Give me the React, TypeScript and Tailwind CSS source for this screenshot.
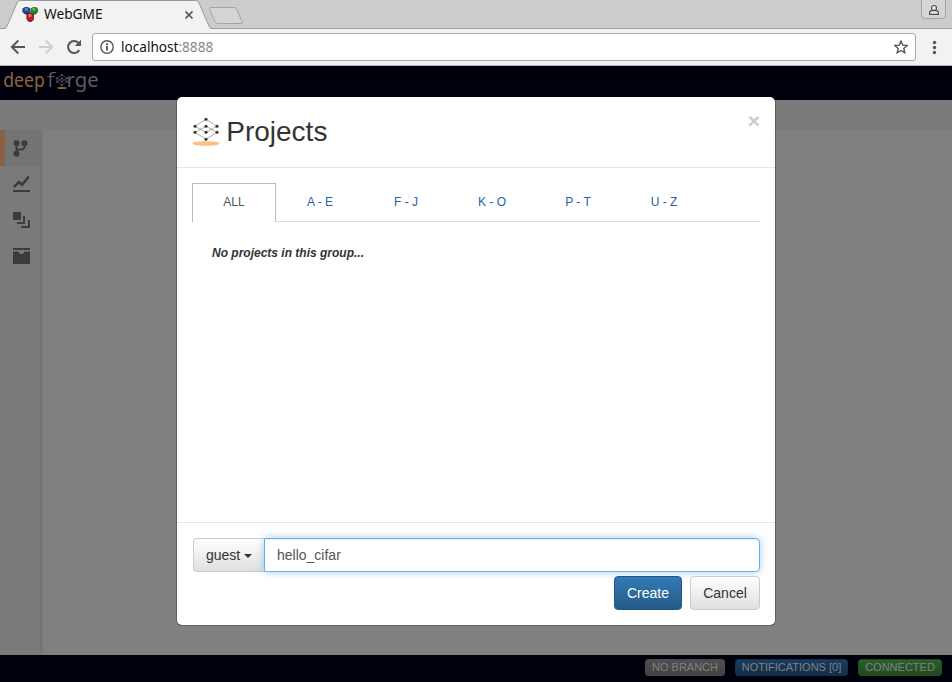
import React from "react";

const sans = "font-['Liberation_Sans',Arial,sans-serif]";
const ui = "font-['Noto_Sans',sans-serif]";

function BrowserTabs() {
  return (
    <div className="relative flex h-[29px] shrink-0 bg-[#cccccc]">
      <svg className="absolute inset-0" width="952" height="29" viewBox="0 0 952 29">
        <path d="M0 28.5H952" stroke="#a0a0a0" />
        <path d="M0 29V28.5H4Q6 28.5 7 26L17 3Q18 .5 20 .5H196Q198 .5 199 3L209 26Q210 28.5 212 28.5V29Z" fill="#f2f2f2" stroke="#999" />
        <path d="M0 28.5H4M212 28.5H214" stroke="#a0a0a0" />
        <path d="M6 29H210" stroke="#f2f2f2" strokeWidth="2" />
        <path d="M211 7.5H234Q236 7.5 237 9.500L242 21.500Q243 23.500 241 23.500H218Q216 23.500 215 21.500L209.500 9.500Q209 7.500 211 7.500Z" fill="#d4d4d4" stroke="#a3a3a3" />
        <path d="M921.500 0V15Q921.500 18.500 925 18.500H942Q945.500 18.500 945.500 15V0" fill="#d5d5d5" stroke="#a3a3a3" />
        <circle cx="934" cy="8" r="2.500" fill="#eee" stroke="#4d4d4d" strokeWidth="1.200" />
        <path d="M929.600 14.400V13Q929.600 10.800 932 10.600H936Q938.400 10.800 938.400 13V14.400Z" fill="#eee" stroke="#4d4d4d" strokeWidth="1.200" />
      </svg>
      <div className="relative flex h-[28px] w-[200px] items-center pl-[22px]">
        <svg width="17" height="17" viewBox="0 0 17 17">
          <path d="M3 1H6L8.300 2.500V6L6 8H2.500L.3 6V2.800Z" fill="#24468f" />
          <path d="M11 1H14L16 2.800V6L14 8H10.500L8.500 6V2.500Z" fill="#268423" />
          <path d="M6.500 7H10L12 9V13L10 15.500H6.500L4.300 13V9Z" fill="#c21b20" />
          <circle cx="4.300" cy="3.300" r="1.600" fill="#6484c0" />
          <circle cx="11.800" cy="3.200" r="1.600" fill="#67b456" />
          <circle cx="8" cy="9.500" r="1.700" fill="#ef6868" />
          <path d="M2.500 7.500L5 8.500 8 6.300 11 8.500 14 7.500M5 13.500L8 15.800 11.500 13.500" fill="none" stroke="#222" strokeWidth=".8" />
        </svg>
        <span className={`${ui} ml-[5px] text-[13.700px] leading-7 text-[#111]`}>WebGME</span>
        <svg className="absolute left-[185px] top-[11px]" width="9" height="9" viewBox="0 0 9 9">
          <path d="M.5 .5L7.500 7.500M7.500 .5L.5 7.500" stroke="#555" strokeWidth="1.700" />
        </svg>
      </div>
    </div>
  );
}

function AddressBar() {
  return (
    <div className="flex h-[37px] shrink-0 items-center border-b border-[#b2b4b2] bg-[#f2f2f2] pl-[10px]">
      <svg width="16" height="16" viewBox="0 0 16 16" fill="none" stroke="#555" strokeWidth="1.900">
        <path d="M15 8H2M8.300 1.500L1.800 8L8.300 14.500" />
      </svg>
      <svg className="ml-3" width="16" height="16" viewBox="0 0 16 16" fill="none" stroke="#d0d0d0" strokeWidth="1.900">
        <path d="M1 8H14M7.700 1.500L14.200 8L7.700 14.500" />
      </svg>
      <svg className="ml-3" width="16" height="16" viewBox="0 0 16 16">
        <path d="M13.300 11A6 6 0 1 1 12.500 3.900" fill="none" stroke="#555" strokeWidth="2" />
        <path d="M15 .8V7H8.800Z" fill="#555" />
      </svg>
      <div className="ml-[10px] flex h-7 w-[824px] items-center rounded-[3px] border border-[#a9a9a9] bg-white pl-[7px]">
        <svg width="14" height="14" viewBox="0 0 14 14" fill="none" stroke="#555">
          <circle cx="7" cy="7" r="6.200" strokeWidth="1.400" />
          <path d="M7 6V10.500M7 3.300V5" strokeWidth="1.900" />
        </svg>
        <span className={`${ui} ml-[7px] text-[13.600px] leading-6 text-[#111]`}>
          localhost<span className="text-[#888]">:8888</span>
        </span>
        <svg className="ml-auto mr-[7px]" width="14" height="14" viewBox="0 0 14 14">
          <path d="M7 1L8.700 5.100 13.200 5.500 9.800 8.400 10.800 12.800 7 10.500 3.200 12.800 4.200 8.400 .8 5.500 5.300 5.100Z" fill="none" stroke="#555" strokeWidth="1.400" />
        </svg>
      </div>
      <svg className="ml-4" width="5" height="15" viewBox="0 0 5 15" fill="#555">
        <circle cx="2.500" cy="2.500" r="1.700" />
        <circle cx="2.500" cy="7.500" r="1.700" />
        <circle cx="2.500" cy="12.500" r="1.700" />
      </svg>
    </div>
  );
}

function Network({ color, dot, line }: { color: string; dot: number; line: number }) {
  return (
    <g>
      <path d="M14 1.500L3 8.500L14 14.500L25 8.500ZM14 8.500L3 14.500L14 21.500L25 14.500Z" fill="none" stroke={color} strokeWidth={line} strokeOpacity=".8" />
      {[[14, 1.500], [3, 8.500], [14, 8.500], [25, 8.500], [3, 14.500], [14, 14.500], [25, 14.500], [14, 21.500]].map(([x, y]) => (
        <circle key={`${x}-${y}`} cx={x} cy={y} r={dot} fill={color} />
      ))}
    </g>
  );
}

function Header() {
  return (
    <div className="h-[34px] shrink-0 bg-[#00000d]">
      <svg width="104" height="34" viewBox="0 0 104 34" className="font-['Noto_Sans',sans-serif]">
        <text transform="translate(3.300 21) scale(.88 1)" fontSize="20" fill="#8e653f">deep</text>
        <text transform="translate(46.500 21) scale(1.350 1)" fontSize="20" fontWeight="300" fill="#5c5c62">f</text>
        <g transform="translate(55.500 8) scale(.46 .52)">
          <Network color="#74747e" dot={1.700} line={1.300} />
        </g>
        <ellipse cx="62" cy="22" rx="4.800" ry="1.100" fill="#8e653f" />
        <text transform="translate(66.500 21) scale(1.020 1)" fontSize="20" fill="#5c5c62">rge</text>
      </svg>
    </div>
  );
}

function Sidebar() {
  const cell = "flex h-9 items-center pb-[2px] pl-[13px]";
  return (
    <div className="w-[40px] shrink-0 bg-[#7a7a7a] shadow-[1px_0_4px_rgba(0,0,0,0.2)]">
      <div className="flex h-9 items-center border-l-[5px] border-[#8c6042] bg-[#747474] pl-2">
        <svg width="16" height="17" viewBox="0 0 16 17" fill="#3b3b3b">
          <circle cx="3.500" cy="3.300" r="3" />
          <circle cx="11.500" cy="3.300" r="3" />
          <circle cx="3.500" cy="13.700" r="3" />
          <path d="M3.500 3V14M11.500 3V7.500L9.500 9.500H3.500" fill="none" stroke="#3b3b3b" strokeWidth="1.900" />
        </svg>
      </div>
      <div className={cell}>
        <svg width="17" height="17" viewBox="0 0 17 17">
          <path d="M.8 12L6 7L9 9.800L15.800 1.500" fill="none" stroke="#3b3b3b" strokeWidth="2.600" />
          <path d="M0 16H17" stroke="#3b3b3b" strokeWidth="2" />
        </svg>
      </div>
      <div className={cell}>
        <svg width="17" height="17" viewBox="0 0 17 17">
          <path d="M0 1H8V9H0Z" fill="#3b3b3b" />
          <path d="M11 5V12H4M16 9V16H8" fill="none" stroke="#3b3b3b" strokeWidth="2" />
        </svg>
      </div>
      <div className={cell}>
        <svg width="17" height="17" viewBox="0 0 17 17" fill="#3b3b3b">
          <path d="M0 1H17V3H0Z" />
          <path d="M0 4.500H5.500Q6 7 8.500 7T11.500 4.500H17V17H0Z" />
        </svg>
      </div>
    </div>
  );
}

function Footer() {
  const badge = "flex h-[17px] items-center justify-center rounded-[3px] border text-[11px] text-[#808080]";
  return (
    <div className={`${sans} flex h-[27px] shrink-0 items-start justify-end gap-[10px] bg-[#00000d] pr-[10px] pt-1`}>
      <div className={`${badge} w-20 border-[#4a4a4a] bg-linear-to-b from-[#505050] to-[#424242]`}>NO BRANCH</div>
      <div className={`${badge} w-[113px] border-[#12304d] bg-linear-to-b from-[#193d5e] to-[#132d47]`}>NOTIFICATIONS [0]</div>
      <div className={`${badge} w-[84px] border-[#1d4e1d] bg-linear-to-b from-[#2b602b] to-[#204b20]`}>CONNECTED</div>
    </div>
  );
}

function ProjectsDialog() {
  const groups = ["A - E", "F - J", "K - O", "P - T", "U - Z"];
  return (
    <div className={`${sans} absolute left-[176px] top-[96px] flex h-[530px] w-[600px] flex-col rounded-[6px] border border-black/25 bg-white bg-clip-padding text-[#333]`}>
      <div className="flex h-[71px] shrink-0 border-b border-[#e5e5e5] pl-[15px] pr-[15px]">
        <svg className="mt-[20px]" width="28" height="30" viewBox="0 0 28 30">
          <g transform="translate(0 .8)"><Network color="#333333" dot={1.500} line={0.5} /></g>
          <ellipse cx="14" cy="26.500" rx="13.500" ry="2.300" fill="#ffbd80" />
        </svg>
        <h1 className="ml-[6.250px] mt-[15px] text-[28px] leading-[40px]">Projects</h1>
        <span className="ml-auto mt-[13px] text-[21px] font-bold leading-[21px] text-[#ccc]">×</span>
      </div>
      <div className="grow px-[15px] pt-[15px] text-[12px]">
        <div className="flex h-[39px] border-b border-[#ddd]">
          <div className="flex h-[39px] w-[84px] items-center justify-center border border-b-0 border-[#bbb] bg-white pb-[2px] text-[#555]">ALL</div>
          {groups.map((g) => (
            <div key={g} className="ml-[2px] flex w-[84px] items-center justify-center text-[#2a5ea8]">{g}</div>
          ))}
        </div>
        <p className="ml-5 mt-[23px] font-bold italic leading-[17px]">No projects in this group...</p>
      </div>
      <div className="h-[103px] shrink-0 border-t border-[#e5e5e5] px-[15px] pl-4 pt-[15px] text-[14px]">
        <div className="flex h-[34px]">
          <button className="flex w-[71px] items-center rounded-l-[4px] border border-r-0 border-[#ccc] bg-linear-to-b from-white to-[#e0e0e0] pl-3">
            guest
            <svg className="ml-1 mt-px" width="8" height="4" viewBox="0 0 8 4"><path d="M0 0H8L4 4Z" fill="#333" /></svg>
          </button>
          <div className="flex grow items-center rounded-r-[4px] border border-[#66afe9] bg-white pl-3 text-[#555] shadow-[inset_0_1px_1px_rgba(0,0,0,0.075),0_0_8px_rgba(102,175,233,0.6)]">
            hello_cifar
          </div>
        </div>
        <div className="relative mt-1 flex h-[34px] justify-end gap-2">
          <button className="w-[68px] rounded-[4px] border border-[#245580] bg-linear-to-b from-[#337ab7] to-[#265a88] text-white">Create</button>
          <button className="w-[70px] rounded-[4px] border border-[#ccc] bg-linear-to-b from-white to-[#e0e0e0]">Cancel</button>
        </div>
      </div>
    </div>
  );
}

export default function App() {
  return (
    <div className="relative flex h-[682px] w-[952px] flex-col overflow-hidden bg-[#808080]">
      <BrowserTabs />
      <AddressBar />
      <Header />
      <div className="h-[30px] shrink-0 bg-[#7a7a7a]" />
      <div className="flex min-h-0 grow overflow-hidden">
        <Sidebar />
      </div>
      <Footer />
      <ProjectsDialog />
    </div>
  );
}
